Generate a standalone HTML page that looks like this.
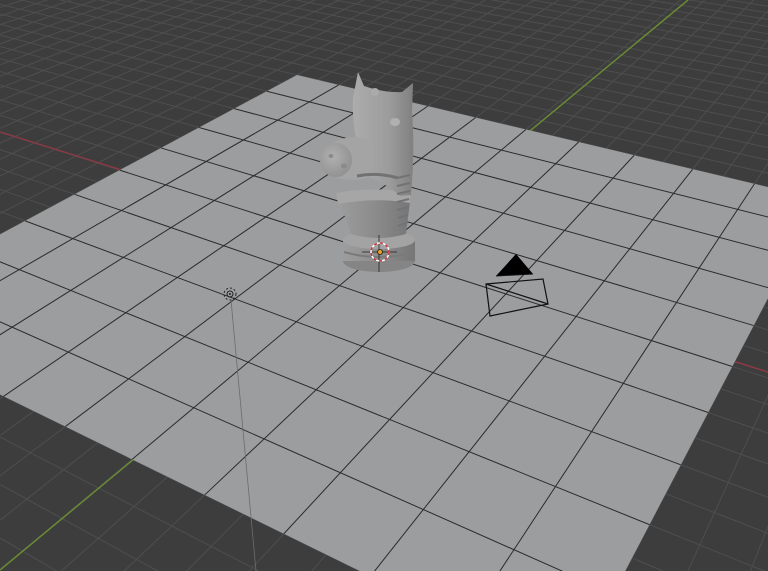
<!DOCTYPE html>
<html><head><meta charset="utf-8">
<style>
html,body{margin:0;padding:0;background:#3d3d3d;overflow:hidden;width:768px;height:571px}
svg{display:block;overflow:hidden}
</style></head>
<body>
<svg id="s" width="768" height="571" viewBox="0 0 768 571" xmlns="http://www.w3.org/2000/svg">
<defs>
<linearGradient id="hg" x1="0" y1="0" x2="1" y2="0">
<stop offset="0" stop-color="#acacac"/><stop offset="0.6" stop-color="#9c9c9c"/><stop offset="1" stop-color="#808080"/>
</linearGradient>
<linearGradient id="bg2" x1="0" y1="0" x2="1" y2="0">
<stop offset="0" stop-color="#9d9d9d"/><stop offset="0.5" stop-color="#8c8c8c"/><stop offset="1" stop-color="#767676"/>
</linearGradient>
<radialGradient id="sn" cx="0.4" cy="0.4" r="0.7">
<stop offset="0" stop-color="#b0b0b0"/><stop offset="1" stop-color="#8e8e8e"/>
</radialGradient>
</defs>
<rect width="768" height="571" fill="#3d3d3d"/>
<g id="floor" stroke="#4e4e4e" stroke-width="1" fill="none"></g>
<line x1="0" y1="132" x2="768" y2="372" stroke="#8a3a44" stroke-width="1.5"/>
<line x1="688" y1="0" x2="0" y2="570" stroke="#6a8a34" stroke-width="1.5"/>
<polygon id="plane" fill="#9c9d9f"/>
<g id="pgrid" stroke="#2b2b2b" stroke-width="1" fill="none"></g>
<line x1="231" y1="300" x2="256" y2="571" stroke="#6c6c6c" stroke-width="0.8"/>
<circle cx="230" cy="294" r="6" fill="none" stroke="#222" stroke-width="1" stroke-dasharray="2 2"/>
<circle cx="230" cy="294" r="3" fill="none" stroke="#222" stroke-width="1"/>
<circle cx="230" cy="294" r="1" fill="#222"/>
<polygon points="496,276 516,254 533,274" fill="#000"/>
<polygon points="486,284 543,279 548,304 490,316" fill="none" stroke="#111" stroke-width="1.2"/>
<line x1="486" y1="284" x2="548" y2="304" stroke="#111" stroke-width="1.2"/>
<line x1="496" y1="276" x2="533" y2="274" stroke="#111" stroke-width="1"/>
<g>
<ellipse cx="379" cy="261" rx="36" ry="11" fill="#858585"/>
<rect x="343" y="240" width="72" height="21" fill="url(#bg2)"/>
<path d="M344,252 Q379,262 414,252" fill="none" stroke="#7a7a7a" stroke-width="2"/>
<ellipse cx="379" cy="240" rx="36" ry="9" fill="#a3a3a3"/>
<path d="M337,194 Q375,186 411,193 L406,234 Q378,242 351,234 Z" fill="url(#bg2)"/>
<path d="M336,193 Q374,186 411,193 L410,203 Q374,197 338,204 Z" fill="#a6a6a6"/>
<path d="M358,72 L364,86 Q385,93 402,92 L413,83 L412,112 Q415,150 411,195 L400,196 Q380,178 360,176 Q352,160 356,140 Q352,115 353,98 Z" fill="url(#hg)"/>
<path d="M325,148 Q345,132 368,140 L372,176 Q352,184 332,176 Z" fill="#a4a4a4"/>
<ellipse cx="336" cy="160" rx="16" ry="17" fill="url(#sn)"/>
<ellipse cx="331" cy="156" rx="2.5" ry="2" fill="#8a8a8a"/>
<ellipse cx="344" cy="166" rx="3" ry="2.5" fill="#8a8a8a"/>
<path d="M357,176 Q378,172 398,178" fill="none" stroke="#727272" stroke-width="3"/>
<ellipse cx="395" cy="122" rx="5" ry="4" fill="#b0b0b0"/>
<ellipse cx="375" cy="92" rx="4" ry="4" fill="#aaa"/>
<g stroke="#737373" stroke-width="2">
<line x1="397" y1="178" x2="410" y2="175"/>
<line x1="397" y1="186" x2="410" y2="183"/>
<line x1="397" y1="194" x2="410" y2="191"/>
<line x1="397" y1="202" x2="409" y2="199"/>
<line x1="397" y1="210" x2="409" y2="207"/>
<line x1="398" y1="218" x2="408" y2="215"/>
<line x1="398" y1="226" x2="407" y2="223"/>
</g>
</g>
<line x1="379" y1="235" x2="379" y2="272" stroke="#222" stroke-width="0.8"/>
<line x1="362" y1="252" x2="397" y2="252" stroke="#222" stroke-width="0.8"/>
<circle cx="380" cy="252" r="9" fill="none" stroke="#fff" stroke-width="1.5"/>
<circle cx="380" cy="252" r="9" fill="none" stroke="#c33" stroke-width="1.5" stroke-dasharray="3 3"/>
<circle cx="380" cy="252" r="2.5" fill="#e8a020" stroke="#000" stroke-width="0.6"/>
</svg>
<script>
(function(){
var P=[[297,75],[819.7,199.4],[571,674.6],[-156,318]];
var x0=P[0][0],y0=P[0][1],x1=P[1][0],y1=P[1][1],x2=P[2][0],y2=P[2][1],x3=P[3][0],y3=P[3][1];
var dx1=x1-x2,dx2=x3-x2,dx3=x0-x1+x2-x3,dy1=y1-y2,dy2=y3-y2,dy3=y0-y1+y2-y3;
var den=dx1*dy2-dx2*dy1;
var g=(dx3*dy2-dx2*dy3)/den,h=(dx1*dy3-dx3*dy1)/den;
var a=x1-x0+g*x1,b=x3-x0+h*x3,c=x0,d=y1-y0+g*y1,e=y3-y0+h*y3,f=y0;
function M(u,v){var w=g*u+h*v+1;return [(a*u+b*v+c)/w,(d*u+e*v+f)/w,w];}
var ns="http://www.w3.org/2000/svg";
document.getElementById('plane').setAttribute('points',P.map(function(p){return p.join(',')}).join(' '));
var N=10,pg=document.getElementById('pgrid');
for(var i=1;i<N;i++){
 var t=i/N,A=M(t,0),B=M(t,1),C=M(0,t),D=M(1,t);
 [[A,B],[C,D]].forEach(function(s){var l=document.createElementNS(ns,'line');
 l.setAttribute('x1',s[0][0]);l.setAttribute('y1',s[0][1]);l.setAttribute('x2',s[1][0]);l.setAttribute('y2',s[1][1]);pg.appendChild(l);});
}
var fl=document.getElementById('floor');
var S=0.05;
function seg(fn){var pts=[];for(var k=0;k<=400;k++){var q=-4+k*9/400;var r=fn(q);if(r[2]>0.12&&r[0]>-50&&r[0]<820&&r[1]>-50&&r[1]<620)pts.push(r[0].toFixed(1)+','+r[1].toFixed(1));}
 if(pts.length>1){var p=document.createElementNS(ns,'polyline');p.setAttribute('points',pts.join(' '));fl.appendChild(p);}}
for(var j=-80;j<=100;j++){var t=j*S;seg(function(q){return M(t,q)});seg(function(q){return M(q,t)});}
})();
</script>
</body></html>
